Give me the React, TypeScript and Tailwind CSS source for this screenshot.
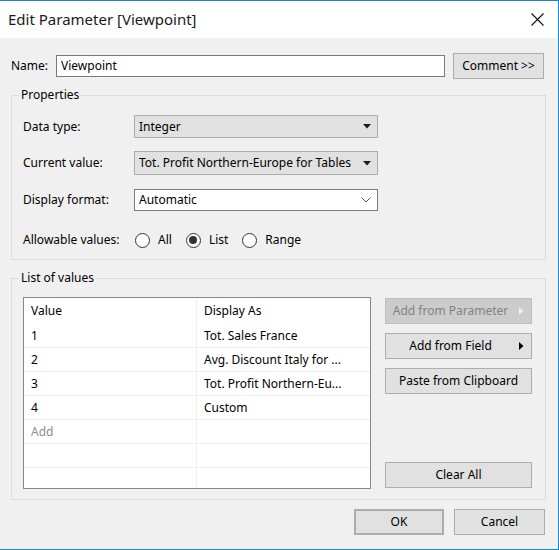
import type { ReactNode } from "react";

const font = { fontFamily: '"Noto Sans", "Open Sans", Arial, sans-serif' };

function Caret({ className = "" }: { className?: string }) {
  return (
    <svg width="8" height="5" viewBox="0 0 8 5" className={className}>
      <path d="M0 0h8L4 4.5z" fill="currentColor" />
    </svg>
  );
}

function RightCaret({ color }: { color: string }) {
  return (
    <svg width="5" height="8" viewBox="0 0 5 8" className="absolute right-[7px] top-1/2 -translate-y-1/2">
      <path d="M0 0v8l4.5-4z" fill={color} />
    </svg>
  );
}

function Select({ value, className = "" }: { value: string; className?: string }) {
  return (
    <div
      className={`flex w-[244px] items-center justify-between border border-[#adadad] bg-[#e1e1e1] pl-[4px] pr-[6px] ${className}`}
    >
      <span>{value}</span>
      <Caret className="text-[#1a1a1a]" />
    </div>
  );
}

function Combo({ value }: { value: string }) {
  return (
    <div className="flex h-[22px] w-[244px] items-center justify-between border border-[#7a7a7a] bg-white pl-[4px] pr-[6px]">
      <span>{value}</span>
      <svg width="10" height="6" viewBox="0 0 10 6">
        <path d="M0.5 0.5l4.5 4.5 4.5-4.5" fill="none" stroke="#5a5a5a" strokeWidth="1" />
      </svg>
    </div>
  );
}

function Radio({ label, checked = false }: { label: string; checked?: boolean }) {
  return (
    <div className="flex items-center gap-[8px]">
      <span className="flex h-[15px] w-[15px] items-center justify-center rounded-full border border-[#333333] bg-white">
        {checked && <span className="h-[8px] w-[8px] rounded-full bg-[#333333]" />}
      </span>
      <span>{label}</span>
    </div>
  );
}

function Button({
  children,
  className = "",
  disabled = false,
  arrow = false,
}: {
  children: ReactNode;
  className?: string;
  disabled?: boolean;
  arrow?: boolean;
}) {
  return (
    <div
      className={`relative flex items-center justify-center border ${
        disabled ? "border-[#bfbfbf] bg-[#cccccc] text-[#838383]" : "border-[#adadad] bg-[#e1e1e1] text-black"
      } ${arrow ? "pr-[16px]" : ""} ${className}`}
    >
      {children}
      {arrow && <RightCaret color={disabled ? "#eeeeee" : "#000000"} />}
    </div>
  );
}

function Group({ title, className = "", children }: { title: string; className?: string; children: ReactNode }) {
  return (
    <fieldset className={`w-[535px] border border-[#dcdcdc] px-[11px] ${className}`}>
      <legend className="-ml-[4px] px-[2px] leading-4">{title}</legend>
      {children}
    </fieldset>
  );
}

const rows = [
  ["1", "Tot. Sales France"],
  ["2", "Avg. Discount Italy for ..."],
  ["3", "Tot. Profit Northern-Eu..."],
  ["4", "Custom"],
];

function ValuesTable() {
  return (
    <div className="flex h-[192px] w-[348px] flex-col border border-[#828790] bg-white">
      <div className="flex h-[26px] shrink-0">
        <div className="flex w-[173px] items-center border-r border-[#f0f0f0] pl-[7px]">Value</div>
        <div className="flex flex-1 items-center pl-[7px]">Display As</div>
      </div>
      {rows.map(([v, d]) => (
        <div key={v} className="flex h-[24px] shrink-0 border-b border-[#f0f0f0]">
          <div className="flex w-[173px] items-center border-r border-[#f0f0f0] pl-[7px]">{v}</div>
          <div className="flex flex-1 items-center pl-[7px]">{d}</div>
        </div>
      ))}
      <div className="flex h-[24px] shrink-0 border-b border-[#f0f0f0]">
        <div className="flex w-[173px] items-center border-r border-[#f0f0f0] pl-[7px] text-[#8d8d8d]">Add</div>
        <div className="flex-1" />
      </div>
      <div className="flex h-[24px] shrink-0 border-b border-[#f0f0f0]">
        <div className="w-[173px] border-r border-[#f0f0f0]" />
        <div className="flex-1" />
      </div>
      <div className="flex flex-1">
        <div className="w-[173px] border-r border-[#f0f0f0]" />
        <div className="flex-1" />
      </div>
    </div>
  );
}

export default function App() {
  return (
    <div
      className="flex h-[550px] w-[559px] flex-col border-y border-r border-[#1883d7] bg-[#f0f0f0] text-[12px] text-black"
      style={font}
    >
      <div className="flex h-[37px] shrink-0 items-center justify-between bg-white pl-[8px] pr-[14px]">
        <span className="text-[15px] text-[#1a1a1a]">Edit Parameter [Viewpoint]</span>
        <svg width="13" height="13" viewBox="0 0 13 13">
          <path d="M0.5 0.5l12 12M12.5 0.5l-12 12" stroke="#111" strokeWidth="1.1" />
        </svg>
      </div>

      <div className="flex flex-col pl-[11px]">
        <div className="mt-[15px] flex h-[26px] items-center">
          <span className="w-[45px]">Name:</span>
          <div className="flex h-[22px] w-[389px] items-center border border-[#7a7a7a] bg-white pl-[4px]">
            Viewpoint
          </div>
          <Button className="ml-[8px] h-[26px] w-[91px]">Comment &gt;&gt;</Button>
        </div>

        <Group title="Properties" className="mt-[8px] pt-[12px] pb-[11px]">
          <div className="flex items-center">
            <span className="w-[111px]">Data type:</span>
            <Select value="Integer" className="h-[23px]" />
          </div>
          <div className="mt-[13px] flex items-center">
            <span className="w-[111px]">Current value:</span>
            <Select value="Tot. Profit Northern-Europe for Tables" className="h-[24px]" />
          </div>
          <div className="mt-[14px] flex items-center">
            <span className="w-[111px]">Display format:</span>
            <Combo value="Automatic" />
          </div>
          <div className="mt-[21px] flex h-[16px] items-center">
            <span className="w-[112px]">Allowable values:</span>
            <div className="flex items-center gap-[14px]">
              <Radio label="All" />
              <Radio label="List" checked />
              <Radio label="Range" />
            </div>
          </div>
        </Group>

        <Group title="List of values" className="mt-[10px] pt-[11px] pb-[10px]">
          <div className="flex gap-[14px]">
            <ValuesTable />
            <div className="flex w-[147px] flex-col pb-[1px]">
              <Button disabled arrow className="mt-[1px] h-[26px]">
                Add from Parameter
              </Button>
              <Button arrow className="mt-[9px] h-[26px]">
                Add from Field
              </Button>
              <Button className="mt-[9px] h-[26px]">Paste from Clipboard</Button>
              <Button className="mt-auto h-[26px]">Clear All</Button>
            </div>
          </div>
        </Group>

        <div className="mt-[9px] flex justify-end gap-[10px] pr-[13px]">
          <Button className="h-[26px] w-[90px] border-2 border-[#0078d7]">OK</Button>
          <Button className="h-[26px] w-[91px]">Cancel</Button>
        </div>
      </div>
    </div>
  );
}
